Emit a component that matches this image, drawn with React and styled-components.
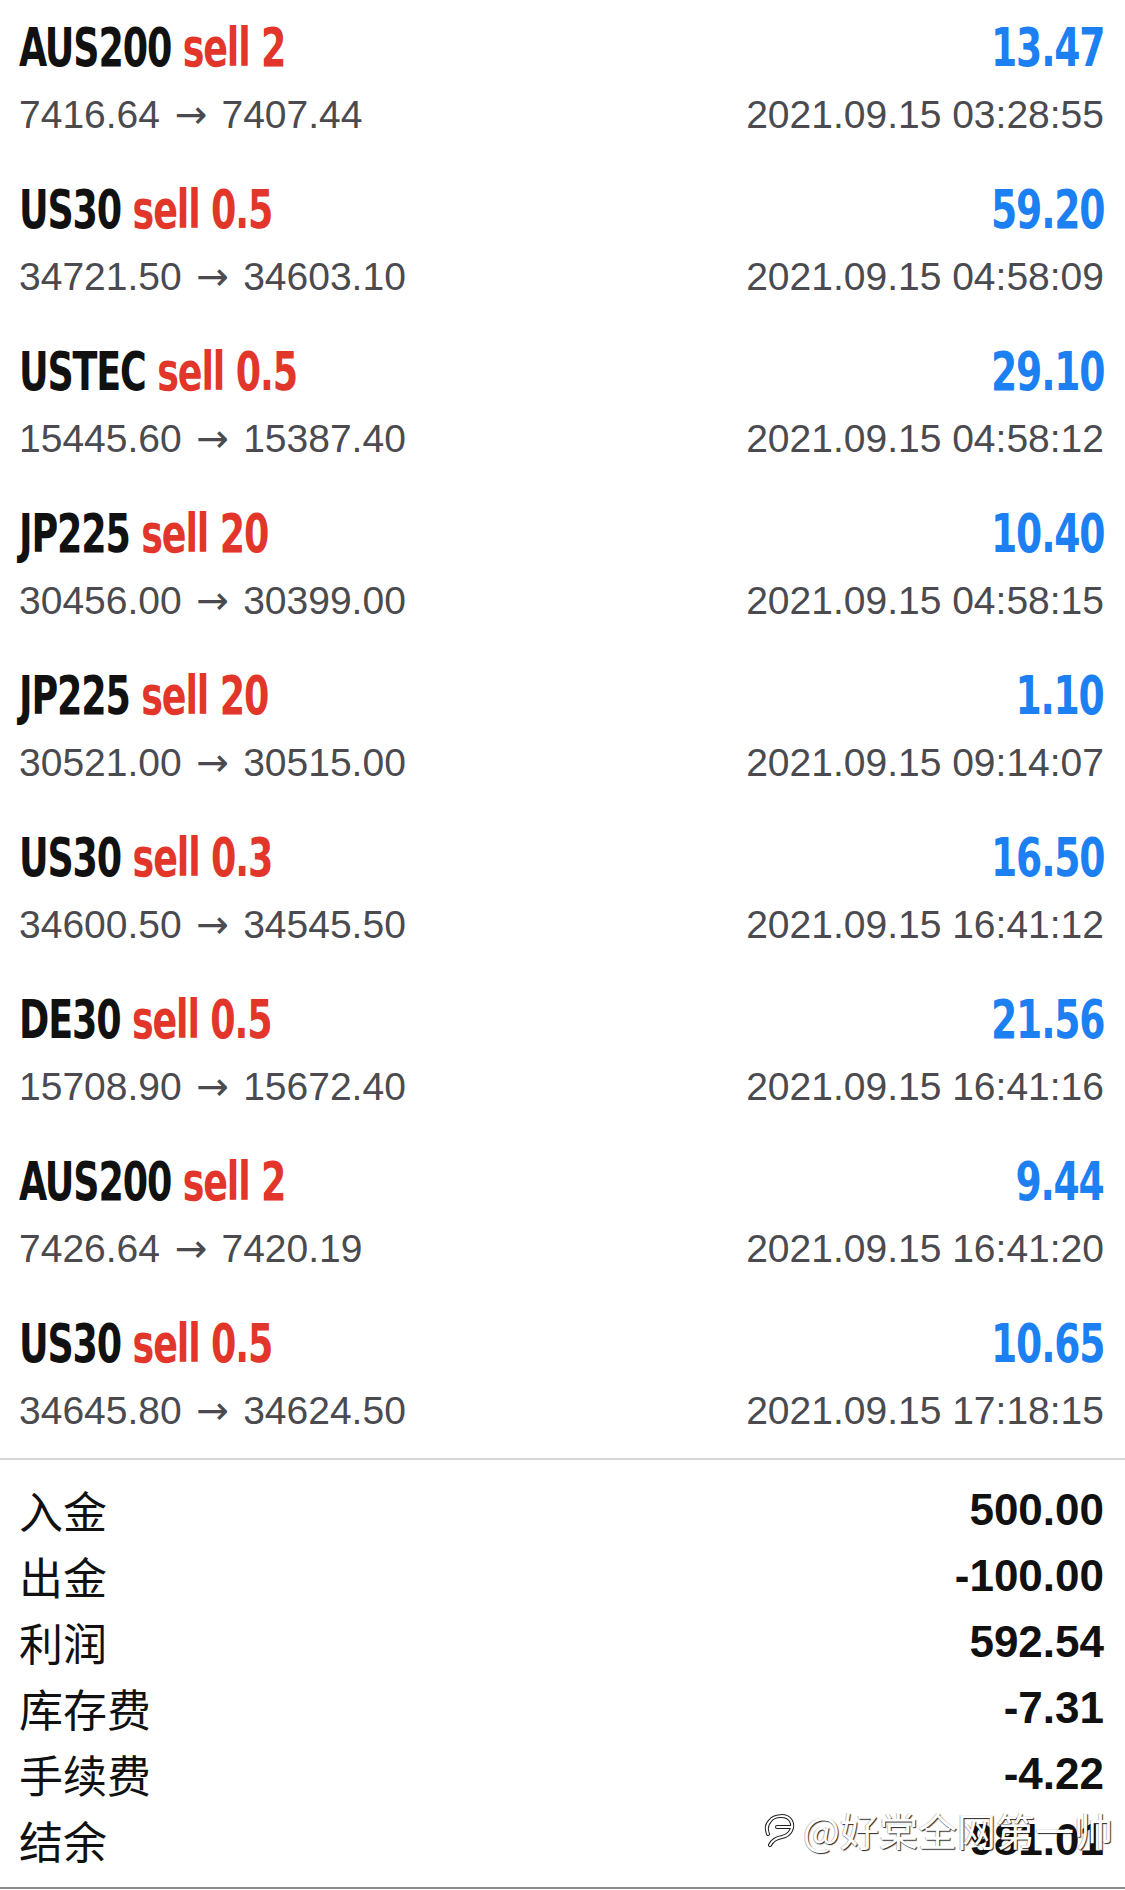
import React from 'react'
import styled, { createGlobalStyle } from 'styled-components'

const GlobalStyle = createGlobalStyle`
  html, body {
    margin: 0;
    padding: 0;
    background: #fff;
  }
`

const trades = [
  { symbol: 'AUS200', lots: '2', from: '7416.64', to: '7407.44', profit: '13.47', time: '2021.09.15 03:28:55' },
  { symbol: 'US30', lots: '0.5', from: '34721.50', to: '34603.10', profit: '59.20', time: '2021.09.15 04:58:09' },
  { symbol: 'USTEC', lots: '0.5', from: '15445.60', to: '15387.40', profit: '29.10', time: '2021.09.15 04:58:12' },
  { symbol: 'JP225', lots: '20', from: '30456.00', to: '30399.00', profit: '10.40', time: '2021.09.15 04:58:15' },
  { symbol: 'JP225', lots: '20', from: '30521.00', to: '30515.00', profit: '1.10', time: '2021.09.15 09:14:07' },
  { symbol: 'US30', lots: '0.3', from: '34600.50', to: '34545.50', profit: '16.50', time: '2021.09.15 16:41:12' },
  { symbol: 'DE30', lots: '0.5', from: '15708.90', to: '15672.40', profit: '21.56', time: '2021.09.15 16:41:16' },
  { symbol: 'AUS200', lots: '2', from: '7426.64', to: '7420.19', profit: '9.44', time: '2021.09.15 16:41:20' },
  { symbol: 'US30', lots: '0.5', from: '34645.80', to: '34624.50', profit: '10.65', time: '2021.09.15 17:18:15' },
]

const totals = [
  { label: '入金', value: '500.00' },
  { label: '出金', value: '-100.00' },
  { label: '利润', value: '592.54' },
  { label: '库存费', value: '-7.31' },
  { label: '手续费', value: '-4.22' },
  { label: '结余', value: '981.01' },
]

const Page = styled.div`
  width: 1125px;
  height: 1890px;
  background: #fff;
  overflow: hidden;
`

const TradeList = styled.div`
  display: flex;
  flex-direction: column;
  border-bottom: 2px solid #d6d6d6;
`

const TradeRow = styled.div`
  height: 162px;
  box-sizing: border-box;
  padding: 18px 21px 0 19px;
  display: grid;
  grid-template-columns: 1fr auto;
  grid-template-rows: 60px 46px;
  row-gap: 14px;
  align-items: center;
`

const TitleCell = styled.div`
  display: flex;
  justify-content: ${p => p.$right ? 'flex-end' : 'flex-start'};
`

const Title = styled.span`
  display: inline-block;
  transform: scaleX(${p => p.$profit ? 0.79 : 0.765});
  transform-origin: ${p => p.$right ? 'right' : 'left'} center;
  font-family: "DejaVu Sans Condensed", "DejaVu Sans", sans-serif;
  font-weight: 700;
  font-size: 53px;
  line-height: 60px;
  letter-spacing: -1.5px;
  color: ${p => p.$profit ? '#1c80f2' : '#111'};
  white-space: nowrap;
`

const Sell = styled.span`
  color: #e3362b;
`

const Sub = styled.div`
  font-family: "Liberation Sans", Arial, sans-serif;
  font-size: 39px;
  line-height: 46px;
  color: #4a4a4f;
  text-align: ${p => p.$right ? 'right' : 'left'};
  white-space: nowrap;
`

const Arrow = styled.span`
  font-family: "DejaVu Sans", sans-serif;
  font-weight: 400;
  margin: 0 2px;
`

const Summary = styled.div`
  position: relative;
  padding: 17px 21px 14px 19px;
  border-bottom: 2px solid #8c8c8c;
  display: flex;
  flex-direction: column;
`

const TotalRow = styled.div`
  height: 66px;
  display: flex;
  align-items: center;
  justify-content: space-between;
`

const Label = styled.span`
  font-family: "Noto Sans CJK SC", "Liberation Sans", sans-serif;
  font-size: 44px;
  line-height: 60px;
  color: #111;
`

const Amount = styled.span`
  font-family: "Liberation Sans", Arial, sans-serif;
  font-weight: 700;
  font-size: 44px;
  color: #111;
`

const Watermark = styled.div`
  position: absolute;
  right: 12px;
  bottom: 36px;
  display: flex;
  align-items: center;
  gap: 6px;
  font-family: "Noto Sans CJK SC", "Liberation Sans", sans-serif;
  font-size: 39px;
  line-height: 44px;
  color: #fff;
  text-shadow: 1px 1px 1px rgba(0, 0, 0, 0.85), -1px 0 0 rgba(0, 0, 0, 0.25);
  white-space: nowrap;
`

const bubble = 'M5 24 C3 19 4 14 7 11 C11 5 24 4 28 11 C31 17 28 25 19 27 C13 28 9 31 7 35 M14 17 L28 17'

const BubbleIcon = () => (
  <svg width="34" height="38" viewBox="0 0 34 38">
    <g fill="none" strokeLinecap="round">
      <path d={bubble} stroke="#222" strokeWidth="4" />
      <path d={bubble} stroke="#fff" strokeWidth="2" />
    </g>
  </svg>
)

export default function App() {
  return (
    <Page>
      <GlobalStyle />
      <TradeList>
        {trades.map((t, i) => (
          <TradeRow key={i}>
            <TitleCell>
              <Title>
                {t.symbol} <Sell>sell {t.lots}</Sell>
              </Title>
            </TitleCell>
            <TitleCell $right>
              <Title $profit $right>{t.profit}</Title>
            </TitleCell>
            <Sub>{t.from}<Arrow> → </Arrow>{t.to}</Sub>
            <Sub $right>{t.time}</Sub>
          </TradeRow>
        ))}
      </TradeList>
      <Summary>
        {totals.map(r => (
          <TotalRow key={r.label}>
            <Label>{r.label}</Label>
            <Amount>{r.value}</Amount>
          </TotalRow>
        ))}
        <Watermark>
          <BubbleIcon />
          <span>@好棠全网第一帅</span>
        </Watermark>
      </Summary>
    </Page>
  )
}
